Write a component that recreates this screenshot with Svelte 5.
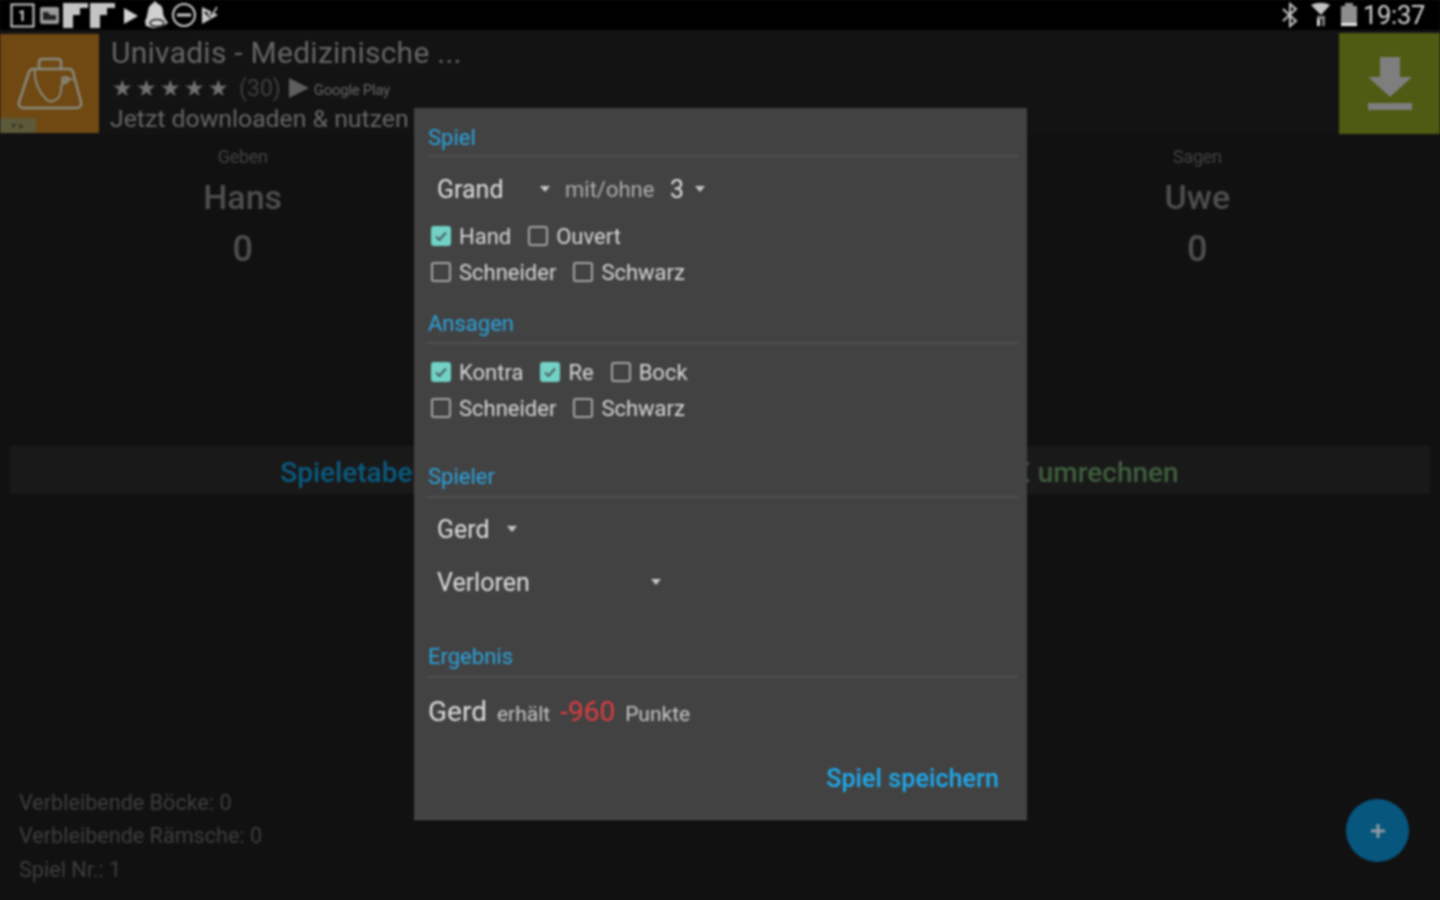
<script>
  const firstChecks = [
    [{ label: "Hand", on: true }, { label: "Ouvert", on: false }],
    [{ label: "Schneider", on: false }, { label: "Schwarz", on: false }],
  ];
  const callChecks = [
    [{ label: "Kontra", on: true }, { label: "Re", on: true }, { label: "Bock", on: false }],
    [{ label: "Schneider", on: false }, { label: "Schwarz", on: false }],
  ];
  const players = [
    { role: "Geben", name: "Hans", score: 0 },
    { role: "Hören", name: "Gerd", score: 0 },
    { role: "Sagen", name: "Uwe", score: 0 },
  ];
</script>

{#snippet caret()}
  <svg class="caret" viewBox="0 0 10 6" width="10" height="6"><path d="M0 0h10L5 6z" fill="currentColor" /></svg>
{/snippet}

{#snippet checks(rows)}
  {#each rows as row}
    <div class="check-row">
      {#each row as c}
        <span class="check">
          <span class="box" class:on={c.on}>
            {#if c.on}
              <svg viewBox="0 0 20 20" width="20" height="20"><path d="M5 10.500l3.500 3.500L15 6.500" fill="none" stroke="#4a5f5c" stroke-width="2" /></svg>
            {/if}
          </span>
          {c.label}
        </span>
      {/each}
    </div>
  {/each}
{/snippet}

<div class="screen">
  <header class="status">
    <div class="status-left">
      <svg width="222" height="30" viewBox="0 0 222 30">
        <rect x="11.500" y="4.500" width="22" height="22" fill="none" stroke="#c8c8c8" stroke-width="2" />
        <text x="18" y="21" font-size="14" font-weight="700" fill="#d8d8d8" font-family="Roboto, sans-serif">1</text>
        <rect x="40" y="7" width="19" height="17" rx="2" fill="#9a9a9a" />
        <path d="M43 12h5l2 3h6v5H43z" fill="#222" />
        <path d="M63 3h25v5h-8v7h-7v13H63zM90 3h25v5h-8v7h-7v13H90z" fill="#c4c4c4" />
        <path d="M124 8l14 8-14 8z" fill="#d4d4d4" />
        <path d="M155 1l3 3c4 1 5 5 5 8 0 4 2 6 3 8l2 3-7 4-8 1-7-2-1-5c2-3 2-6 3-10 0-3 2-6 4-7z" fill="#cfcfcf" />
        <ellipse cx="157" cy="23" rx="7" ry="3.500" fill="none" stroke="#222" stroke-width="1.500" />
        <circle cx="184" cy="15" r="11" fill="none" stroke="#c8c8c8" stroke-width="2" />
        <rect x="177" y="13.500" width="14" height="3" fill="#c8c8c8" />
        <path d="M202 7l16 8-16 9z" fill="#c8c8c8" />
        <path d="M205 12l5 5 7-13" fill="none" stroke="#000" stroke-width="2" />
        <path d="M208 14l3 3 6-10" fill="none" stroke="#c8c8c8" stroke-width="1.500" />
      </svg>
    </div>
    <div class="status-right">
      <svg width="78" height="30" viewBox="0 0 78 30">
        <path d="M1 9l13 12-6 5V4l6 5L1 21" fill="none" stroke="#c4c4c4" stroke-width="2" />
        <path d="M29 5c6-3 13-3 19 0l-9 10z" fill="#c4c4c4" />
        <path d="M35 16h8v3h-8z" fill="#888" />
        <rect x="35" y="19" width="3" height="7" fill="#dcdcdc" />
        <rect x="40" y="19" width="3" height="7" fill="#777" />
        <rect x="59" y="6" width="16" height="20" fill="#8e8e8e" />
        <rect x="63" y="3" width="8" height="3" fill="#8e8e8e" />
        <rect x="59" y="23" width="16" height="3" fill="#e6e6e6" />
      </svg>
      <span class="clock">19:37</span>
    </div>
  </header>

  <section class="ad">
    <div class="ad-icon">
      <svg width="70" height="56" viewBox="0 0 70 56">
        <path d="M24 13V6q0-3 3-3h16q3 0 3 3v7M18 13h36q3 0 4 3l8 30q1 6-5 6H9q-6 0-5-6l10-30q1-3 4-3z" fill="none" stroke="#8a8a80" stroke-width="2.500" />
        <path d="M20 14c-1 14 6 24 12 30 6 4 14-2 14-10s6-14 12-10" fill="none" stroke="#8a8a80" stroke-width="2" />
        <circle cx="50" cy="24" r="3" fill="none" stroke="#8a8a80" stroke-width="2" />
      </svg>
      <span class="ad-mark">▾ ▸</span>
    </div>
    <div class="ad-text">
      <div class="ad-title">Univadis - Medizinische ...</div>
      <div class="ad-rating">
        <span class="stars">★★★★★</span>
        <span class="count">(30)</span>
        <svg width="22" height="22" viewBox="0 0 22 22"><path d="M1 1l20 10L1 21z" fill="#5e5e5e" /></svg>
        <span class="gplay">Google Play</span>
      </div>
      <div class="ad-cta">Jetzt downloaden &amp; nutzen</div>
    </div>
    <div class="ad-download">
      <svg width="46" height="54" viewBox="0 0 46 54">
        <path d="M13 0h20v20h12L23 40 1 20h12zM1 46h44v7H1z" fill="#7e7e7e" />
      </svg>
    </div>
  </section>

  <section class="players">
    {#each players as p}
      <div class="player">
        <div class="role">{p.role}</div>
        <div class="name">{p.name}</div>
        <div class="score">{p.score}</div>
      </div>
    {/each}
  </section>

  <section class="actions">
    <div class="act blue">Spieletabelle</div>
    <div class="act green">In € umrechnen</div>
  </section>

  <footer class="stats">
    <div>Verbleibende Böcke: 0</div>
    <div>Verbleibende Rämsche: 0</div>
    <div>Spiel Nr.: 1</div>
  </footer>

  <button class="fab" aria-label="Neues Spiel">
    <svg width="14" height="14" viewBox="0 0 14 14"><path d="M5.500 0h3v5.500H14v3H8.500V14h-3V8.500H0v-3h5.500z" fill="#8f9ca3" /></svg>
  </button>

  <div class="dialog">
    <h2>Spiel</h2>
    <div class="select-row">
      <span class="select grand">Grand {@render caret()}</span>
      <span class="muted">mit/ohne</span>
      <span class="select num">3 {@render caret()}</span>
    </div>
    {@render checks(firstChecks)}

    <h2 class="calls">Ansagen</h2>
    <div class="calls-rows">{@render checks(callChecks)}</div>

    <h2 class="spieler">Spieler</h2>
    <div class="select gerd">Gerd {@render caret()}</div>
    <div class="select verloren">Verloren {@render caret()}</div>

    <h2 class="ergebnis">Ergebnis</h2>
    <div class="result">
      <span class="big">Gerd</span>
      <span class="small">erhält</span>
      <span class="big red">-960</span>
      <span class="small">Punkte</span>
    </div>
    <div class="dialog-actions">
      <button class="save">Spiel speichern</button>
    </div>
  </div>
</div>

<style>
  :global(body) {
    margin: 0;
    background: #111;
  }

  .screen {
    position: relative;
    width: 1440px;
    height: 900px;
    overflow: hidden;
    display: flex;
    flex-direction: column;
    background: #111;
    font-family: Roboto, sans-serif;
    filter: blur(0.8px);
  }

  .status {
    height: 30px;
    flex: none;
    background: #000;
    display: flex;
    justify-content: space-between;
    align-items: center;
  }

  .status-left, .status-right {
    display: flex;
    align-items: center;
  }

  .status-left svg, .status-right svg {
    display: block;
  }

  .status-right {
    margin-left: auto;
    gap: 3px;
    padding-right: 15px;
  }

  .clock {
    color: #d4d4d4;
    font-size: 25.500px;
    letter-spacing: -0.3px;
  }

  .ad {
    height: 104px;
    flex: none;
    display: flex;
    background: #131313;
  }

  .ad-icon {
    position: relative;
    width: 99px;
    margin: 4px 0 1px;
    background: #6f4812;
    display: flex;
    align-items: center;
    justify-content: center;
  }

  .ad-mark {
    position: absolute;
    left: 0;
    bottom: 0;
    width: 36px;
    height: 15px;
    background: #5d5a3a;
    color: #3b3b2a;
    font-size: 11px;
    line-height: 15px;
    text-align: center;
  }

  .ad-text {
    flex: 1;
    padding-left: 12px;
    color: #666;
  }

  .ad-title {
    font-size: 30px;
    line-height: 36px;
    margin-top: 5px;
    letter-spacing: 0.25px;
  }

  .ad-rating {
    height: 32px;
    display: flex;
    align-items: center;
    gap: 7px;
    padding-top: 1px;
  }

  .stars {
    font-size: 23px;
    letter-spacing: 3.400px;
    font-family: "DejaVu Sans", sans-serif;
    color: #707070;
    margin-left: 1px;
  }

  .count {
    font-size: 23px;
    color: #3f3f3f;
  }

  .gplay {
    font-size: 15px;
    color: #666;
    letter-spacing: -0.3px;
    margin-left: -3px;
    padding-top: 3px;
  }

  .ad-cta {
    font-size: 24.800px;
    line-height: 30px;
    margin-left: -1px;
  }

  .ad-download {
    width: 101px;
    margin-top: 3px;
    background: #4f5a12;
    display: flex;
    align-items: center;
    justify-content: center;
  }

  .players {
    display: grid;
    grid-template-columns: repeat(3, 1fr);
    padding: 12px 4px 0;
    height: 300px;
    flex: none;
    box-sizing: border-box;
    text-align: center;
  }

  .role {
    font-size: 18px;
    line-height: 22px;
    color: #424242;
    letter-spacing: -0.3px;
  }

  .name {
    font-size: 34px;
    line-height: 40px;
    margin-top: 9px;
    font-weight: 500;
    color: #4e4e4e;
  }

  .score {
    font-size: 36px;
    line-height: 42px;
    margin-top: 11px;
    font-weight: 500;
    color: #4e4e4e;
  }

  .actions {
    margin: 12px 10px 0;
    height: 48px;
    flex: none;
    display: grid;
    grid-template-columns: 1fr 1fr;
    background: #191919;
    font-size: 28px;
    font-weight: 500;
    line-height: 53px;
    text-align: center;
  }

  .blue {
    color: #0a5a80;
    padding-right: 8px;
  }

  .green {
    color: #3f5f3d;
    padding-left: 13px;
  }

  .stats {
    margin-top: auto;
    padding: 0 0 14px 19px;
    color: #3e3e3e;
    font-size: 21.600px;
    line-height: 33.500px;
  }

  .fab {
    position: absolute;
    left: 1346px;
    top: 799px;
    width: 63px;
    height: 63px;
    border: none;
    padding: 0;
    border-radius: 50%;
    background: #06567e;
    display: flex;
    align-items: center;
    justify-content: center;
  }

  .dialog {
    position: absolute;
    left: 414px;
    top: 108px;
    width: 613px;
    height: 712px;
    box-sizing: border-box;
    padding: 0 9px 0 14px;
    background: #424242;
    border-bottom: 1px solid #555;
    color: #dcdcdc;
  }

  h2 {
    margin: 17px 0 0 -1px;
    padding: 0 0 6px 1px;
    height: 24px;
    border-bottom: 2px solid #4f4f4f;
    font-size: 22px;
    line-height: 26px;
    font-weight: 400;
    color: #2ba2dc;
  }

  h2.calls {
    margin-top: 21px;
    height: 25px;
  }

  h2.spieler {
    margin-top: 38px;
    height: 26px;
  }

  h2.ergebnis {
    margin-top: 47px;
    height: 25px;
    padding-bottom: 7px;
  }

  .select-row {
    display: flex;
    align-items: center;
    height: 30px;
    margin-top: 17px;
    padding-left: 9px;
  }

  .select {
    display: flex;
    align-items: center;
    color: #dedede;
    font-size: 25px;
  }

  .caret {
    color: #c8c8c8;
    flex: none;
  }

  .grand {
    width: 127px;
    justify-content: space-between;
    padding-right: 14px;
    box-sizing: border-box;
  }

  .muted {
    font-size: 22px;
    color: #adadad;
    width: 105px;
    padding-left: 1px;
  }

  .num {
    gap: 11px;
  }

  .check-row {
    display: flex;
    align-items: center;
    gap: 14px;
    height: 36px;
  }

  .select-row + .check-row {
    margin-top: 14px;
  }

  .calls-rows {
    margin-top: 10px;
  }

  .check {
    display: flex;
    align-items: center;
    gap: 8px;
    font-size: 22px;
    color: #d6d6d6;
  }

  .box {
    width: 20px;
    height: 20px;
    box-sizing: border-box;
    margin-left: 3px;
    border: 2px solid #a4a4a4;
    border-radius: 3px;
    position: relative;
  }

  .box.on {
    border: none;
    background: #72d2c6;
  }

  .box svg {
    display: block;
  }

  .gerd {
    margin-top: 16px;
    height: 30px;
    padding-left: 9px;
    gap: 17px;
  }

  .verloren {
    margin-top: 23px;
    height: 30px;
    padding-left: 9px;
    width: 233px;
    justify-content: space-between;
    box-sizing: border-box;
  }

  .result {
    display: flex;
    align-items: baseline;
    gap: 10px;
    margin-top: 17px;
    height: 36px;
  }

  .big {
    font-size: 28px;
  }

  .small {
    font-size: 21px;
    color: #c6c6c6;
  }

  .red {
    color: #e03c40;
  }

  .dialog-actions {
    display: flex;
    justify-content: flex-end;
    margin-top: 31px;
    padding-right: 19px;
  }

  .save {
    background: none;
    border: none;
    padding: 0;
    color: #1ea9ec;
    font: 500 25px/34px Roboto, sans-serif;
    letter-spacing: 0.1px;
  }
</style>
